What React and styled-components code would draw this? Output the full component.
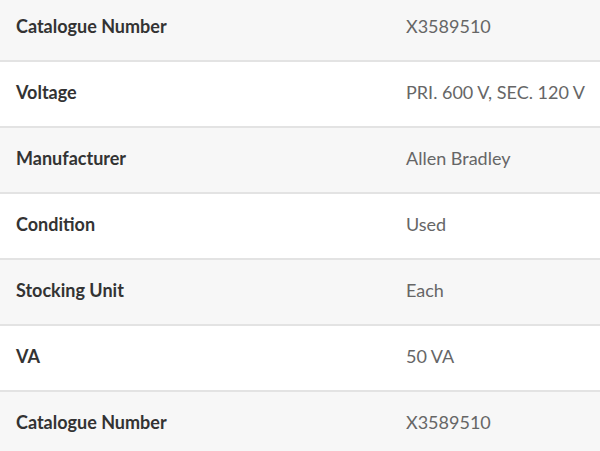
import React from 'react'
import styled, { createGlobalStyle } from 'styled-components'

const GlobalStyle = createGlobalStyle`
  html, body {
    margin: 0;
    padding: 0;
    background: #ffffff;
    overflow: hidden;
  }
  body {
    font-family: Lato, "Open Sans", sans-serif;
  }
`

const Table = styled.div`
  display: flex;
  flex-direction: column;
  width: 600px;
  margin-top: -4px;
`

const Row = styled.div`
  display: grid;
  grid-template-columns: 390px 1fr;
  align-items: center;
  box-sizing: content-box;
  height: 60px;
  padding: 0 0 4px 16px;
  background: ${(p) => (p.$shaded ? '#f7f7f7' : '#ffffff')};
  border-bottom: 2px solid #e3e3e3;
`

const Label = styled.div`
  font-size: 18px;
  font-weight: 700;
  color: #333333;
  white-space: nowrap;
`

const Value = styled.div`
  font-size: 18px;
  color: #666666;
  white-space: nowrap;
`

const specs = [
  ['Catalogue Number', 'X3589510'],
  ['Voltage', 'PRI. 600 V, SEC. 120 V'],
  ['Manufacturer', 'Allen Bradley'],
  ['Condition', 'Used'],
  ['Stocking Unit', 'Each'],
  ['VA', '50 VA'],
  ['Catalogue Number', 'X3589510'],
]

const App = () => {
  return (
    <>
      <GlobalStyle />
      <Table>
        {specs.map(([label, value], i) => (
          <Row key={i} $shaded={i % 2 === 0}>
            <Label>{label}</Label>
            <Value>{value}</Value>
          </Row>
        ))}
      </Table>
    </>
  )
}

export default App
